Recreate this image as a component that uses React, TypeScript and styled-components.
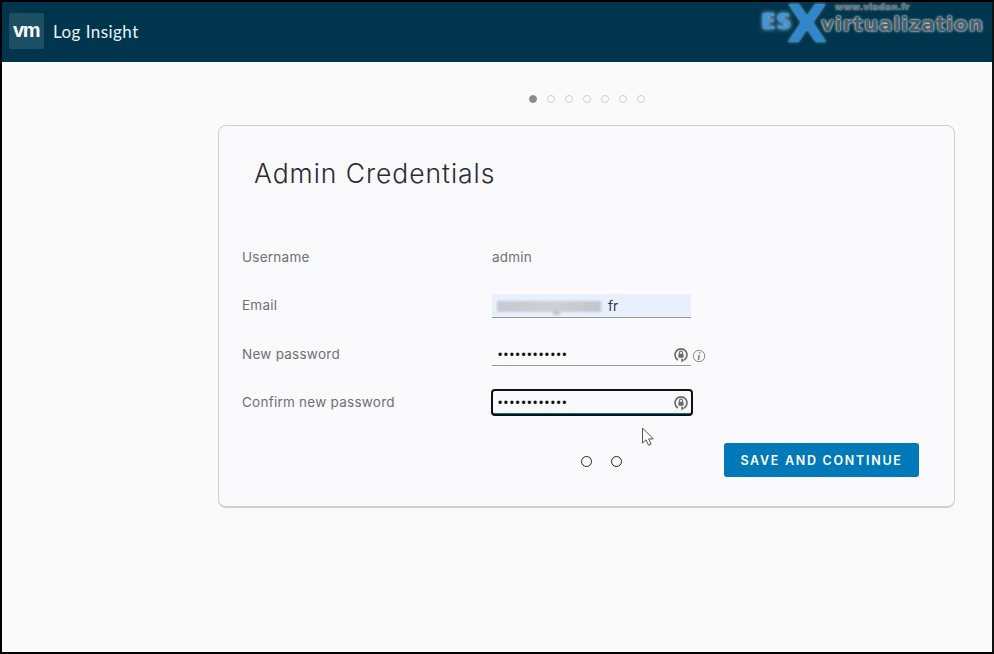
import React from "react";
import styled, { createGlobalStyle } from "styled-components";

const Global = createGlobalStyle`
  html, body { margin: 0; padding: 0; background: #fafafa; }
  * { box-sizing: border-box; }
`;

const Frame = styled.div`
  position: relative;
  width: 994px;
  height: 654px;
  border: 2px solid #000;
  border-right-color: #111;
  background: #fafafa;
  font-family: Inter, "Open Sans", sans-serif;
  overflow: hidden;
`;

const Header = styled.header`
  display: flex;
  align-items: center;
  height: 60px;
  padding: 0 10px 2px 7px;
  background: #00364d;
`;

const VmTile = styled.div`
  display: flex;
  align-items: center;
  justify-content: center;
  width: 35px;
  height: 36px;
  border-radius: 2px;
  background: #1d4f64;
  color: #fff;
  font-family: "Liberation Sans", sans-serif;
  font-weight: 700;
  font-size: 20px;
  letter-spacing: -1.4px;
  line-height: 20px;
  padding: 0 1px 2px 0;
`;

const Product = styled.div`
  margin-left: 9px;
  color: #e8f4f8;
  font-family: Lato, sans-serif;
  font-size: 17px;
  letter-spacing: 0.45px;
`;

const Logo = styled.div`
  position: relative;
  width: 232px;
  height: 50px;
  margin-left: auto;
  margin-top: -12px;
  font-family: "DejaVu Sans", sans-serif;
`;

const LogoEs = styled.span`
  position: absolute;
  left: 11px;
  top: 9px;
  font-size: 22px;
  font-weight: 700;
  color: #3f95d8;
  text-shadow: 0 0 4px #b9d4e4;
`;

const LogoX = styled.span`
  position: absolute;
  left: 37px;
  top: 3px;
  font-size: 52px;
  line-height: 42px;
  font-weight: 700;
  color: #3087cc;
  text-shadow: 0 0 3px #8fb4c8;
`;

const LogoWord = styled.span`
  position: absolute;
  left: 71px;
  top: 12px;
  font-size: 20px;
  font-weight: 700;
  letter-spacing: 0.9px;
  color: #4c5f69;
  text-shadow: 0 0 2px #d7dee2, 0 0 3px #d7dee2;
`;

const LogoUrl = styled.span`
  position: absolute;
  left: 85px;
  top: 2px;
  font-size: 9px;
  font-weight: 700;
  letter-spacing: 0.1px;
  color: #5c6d76;
  text-shadow: 0 0 2px #cfd8dc;
`;

const Main = styled.main`
  width: 737px;
  margin-left: 216px;
`;

const Stepper = styled.div`
  display: flex;
  justify-content: center;
  gap: 10px;
  padding-top: 33px;
  height: 63px;
`;

const Dot = styled.span<{ $active?: boolean }>`
  width: 8px;
  height: 8px;
  border-radius: 50%;
  background: ${(p) => (p.$active ? "#8c8c8c" : "transparent")};
  border: 1.5px solid ${(p) => (p.$active ? "#8c8c8c" : "#d0d0d0")};
`;

const Card = styled.section`
  height: 383px;
  padding: 0 35px 0 23px;
  background: #fafafd;
  border: 1px solid #d0d0d0;
  border-bottom-width: 2px;
  border-radius: 8px;
`;

const Title = styled.h1`
  margin: 0;
  padding: 30px 0 0 12px;
  height: 107px;
  color: #2b2b33;
  font-family: Inter, sans-serif;
  font-size: 26.5px;
  font-weight: 300;
  letter-spacing: 0.95px;
  line-height: 34px;
`;

const Form = styled.div`
  display: grid;
  grid-template-columns: 250px 200px 1fr;
  grid-auto-rows: 48.3px;
  align-items: center;
`;

const Label = styled.div`
  color: #6f6f73;
  font-size: 13.5px;
  letter-spacing: 0.25px;
`;

const Value = styled.div`
  grid-column: 2 / 4;
  color: #6f6f73;
  font-size: 13.5px;
  letter-spacing: 0.2px;
`;

const Field = styled.div<{ $filled?: boolean; $focus?: boolean }>`
  position: relative;
  display: flex;
  align-items: center;
  justify-content: space-between;
  width: ${(p) => (p.$focus ? "200px" : "199px")};
  height: ${(p) => (p.$focus ? "25px" : "24px")};
  margin-top: ${(p) => (p.$filled ? "2px" : p.$focus ? "1px" : "0")};
  padding: ${(p) => (p.$filled ? "0" : "3px")} ${(p) => (p.$focus ? "3px" : "2px")} 0 5px;
  background: ${(p) => (p.$filled ? "#e8f0fe" : "transparent")};
  border-bottom: 1px solid #9a9a9a;
  ${(p) =>
    p.$focus
      ? `outline: 2px solid #111; outline-offset: -1px; border-radius: 3px; border-bottom: 2px solid #0079b8;`
      : ""}
`;

const Blurred = styled.span`
  position: relative;
  display: inline-block;
  width: 104px;
  height: 11px;
  margin: 1px 7px 0 0;
  background: linear-gradient(90deg, #c8c9d0, #cfd0d6 55%, #c4c5cc);
  filter: blur(1.2px);

  &::after {
    content: "";
    position: absolute;
    left: 56px;
    bottom: -3px;
    width: 7px;
    height: 4px;
    background: #c4c5cc;
  }
`;

const Typed = styled.span`
  display: flex;
  align-items: center;
  color: #333344;
  font-size: 13.5px;
`;

const Secret = styled.span`
  color: #111;
  font-family: "Liberation Sans", sans-serif;
  font-size: 12px;
  letter-spacing: 1.65px;
  line-height: 16px;
  padding-left: 1px;
`;

const Info = styled.span`
  display: inline-flex;
  margin: 4px 0 0 0;
  align-self: center;
`;

const Actions = styled.div`
  position: relative;
  display: flex;
  justify-content: flex-end;
  margin-top: 17px;
`;

const Spinner = styled.div`
  position: absolute;
  left: 339px;
  top: 13px;
  display: flex;
  gap: 19px;
`;

const Ring = styled.span`
  width: 11px;
  height: 11px;
  border-radius: 50%;
  background: #fafafd;
  border: 1.3px solid #222;
`;

const SaveButton = styled.button`
  width: 195px;
  height: 34px;
  padding: 1px 0 0;
  border: 0;
  border-radius: 3px;
  background: #0079b8;
  color: #fff;
  font-family: Inter, sans-serif;
  font-size: 12.5px;
  font-weight: 600;
  letter-spacing: 1.72px;
`;

const Cursor = styled.svg`
  position: absolute;
  left: 639px;
  top: 425px;
`;

const KeyIcon = () => (
  <svg width="16" height="16" viewBox="0 0 16 16" fill="none">
    <path d="M5 13.1A6 6 0 1 1 11 13.1" stroke="#6b6b6b" strokeWidth="1.7" />
    <path d="M11.2 13.2 8.3 15.6V11z" fill="#6b6b6b" />
    <rect x="5.4" y="6.8" width="5.2" height="4" rx="0.6" fill="#6b6b6b" />
    <path d="M6.5 7V5.6a1.5 1.5 0 0 1 3 0V7" stroke="#6b6b6b" strokeWidth="1.1" />
  </svg>
);

const InfoIcon = () => (
  <svg width="14" height="14" viewBox="0 0 14 14" fill="none">
    <circle cx="7" cy="7" r="5.7" stroke="#8a8a8a" strokeWidth="1" />
    <path d="M7.7 3.2v1.4M7.3 5.8 6.4 10.8" stroke="#6a6a6a" strokeWidth="1.3" />
  </svg>
);

export default function App() {
  return (
    <>
      <Global />
      <Frame>
        <Header>
          <VmTile>vm</VmTile>
          <Product>Log Insight</Product>
          <Logo>
            <LogoUrl>www.vladan.fr</LogoUrl>
            <LogoEs>ES</LogoEs>
            <LogoWord>virtualization</LogoWord>
            <LogoX>X</LogoX>
          </Logo>
        </Header>
        <Main>
          <Stepper>
            <Dot $active />
            <Dot />
            <Dot />
            <Dot />
            <Dot />
            <Dot />
            <Dot />
          </Stepper>
          <Card>
            <Title>Admin Credentials</Title>
            <Form>
              <Label>Username</Label>
              <Value>admin</Value>

              <Label>Email</Label>
              <Field $filled>
                <Typed>
                  <Blurred />
                  fr
                </Typed>
              </Field>
              <span />

              <Label>New password</Label>
              <Field>
                <Secret>••••••••••••</Secret>
                <KeyIcon />
              </Field>
              <Info>
                <InfoIcon />
              </Info>

              <Label>Confirm new password</Label>
              <Field $focus>
                <Secret>••••••••••••</Secret>
                <KeyIcon />
              </Field>
              <span />
            </Form>
            <Actions>
              <Spinner>
                <Ring />
                <Ring />
              </Spinner>
              <SaveButton>SAVE AND CONTINUE</SaveButton>
            </Actions>
          </Card>
        </Main>
        <Cursor width="14" height="20" viewBox="0 0 14 20">
          <path d="M1.5 1v15l3.6-3.2 2.4 5.4 2.6-1.1-2.4-5.2h4.6z" fill="#fff" stroke="#555" strokeWidth="1" />
        </Cursor>
      </Frame>
    </>
  );
}
